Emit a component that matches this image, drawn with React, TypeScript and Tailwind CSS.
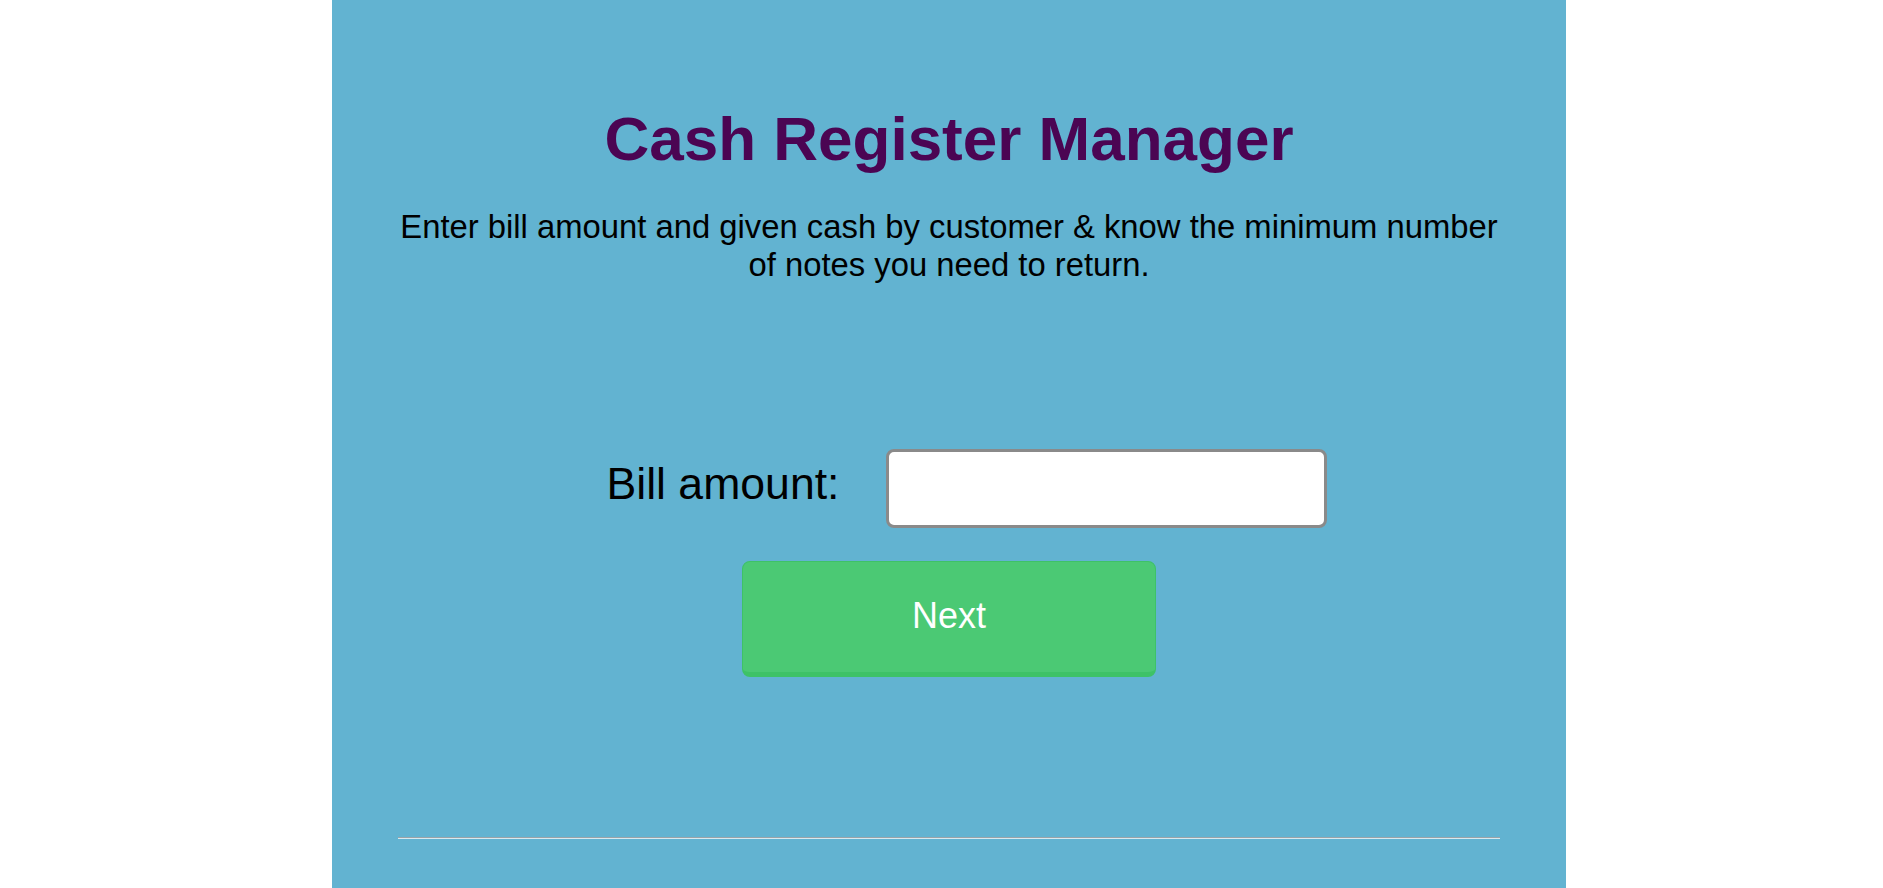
export default function App() {
  return (
    <div className="min-h-screen bg-white font-['Liberation_Sans',Arial,sans-serif]">
      <main className="ml-[332px] min-h-screen w-[1234px] bg-[#62b3d1] px-[66px] pb-10">
        {/* Header */}
        <h1 className="pt-[103px] text-center text-[62px] leading-[1.15] font-bold text-[#4b0553]">
          Cash Register Manager
        </h1>
        <p className="mt-[34px] text-center text-[32.8px] leading-[1.15] text-black">
          Enter bill amount and given cash by customer &amp; know the minimum
          number of notes you need to return.
        </p>

        {/* Form */}
        <div className="mt-[165px] flex items-center justify-center gap-[46px] pl-[35px]">
          <label
            htmlFor="bill"
            className="pb-[10px] text-[44.6px] leading-[1.15] text-black"
          >
            Bill amount:
          </label>
          <input
            id="bill"
            type="number"
            className="h-[79px] w-[441px] rounded-lg border-[3px] border-[#8a8a8a] bg-white px-3 text-3xl outline-none"
          />
        </div>

        <div className="mt-[33px] flex justify-center">
          <button className="h-[116px] w-[414px] rounded-lg border border-b-[5px] border-[#3ec267] bg-[#4bc974] pb-[2px] text-[36px] text-white">
            Next
          </button>
        </div>

        <hr className="mt-[160px] border-t border-b border-t-[#9aa3a8] border-b-[#d6eaf1]" />
      </main>
    </div>
  );
}
